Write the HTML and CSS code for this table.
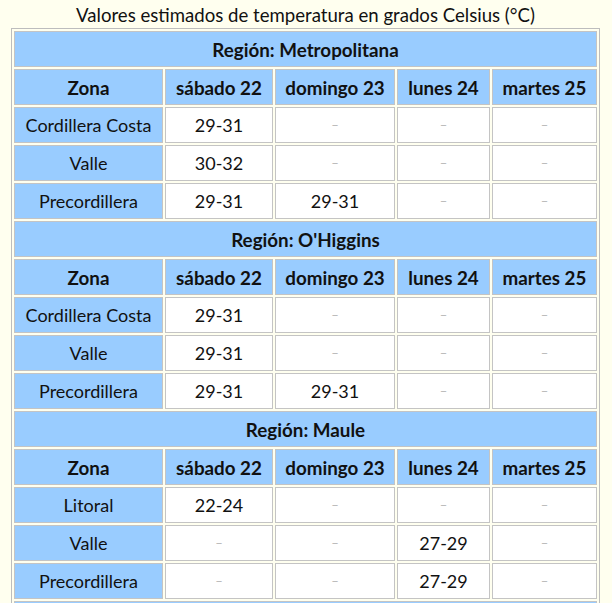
FILE: index.html
```html
<!DOCTYPE html>
<html lang="es">
<head>
<meta charset="utf-8">
<link rel="stylesheet" href="styles.css">
</head>
<body>
<div class="page">
  <div class="title">Valores estimados de temperatura en grados Celsius (°C)</div>
  <table class="temps">
    <colgroup>
      <col class="c-zona"><col class="c-sab"><col class="c-dom"><col class="c-lun"><col class="c-mar">
    </colgroup>
    <tbody>
      <tr><th class="region" colspan="5">Región: Metropolitana</th></tr>
      <tr><th>Zona</th><th>sábado 22</th><th>domingo 23</th><th>lunes 24</th><th>martes 25</th></tr>
      <tr><td class="zona">Cordillera Costa</td><td>29-31</td><td class="na">–</td><td class="na">–</td><td class="na">–</td></tr>
      <tr><td class="zona">Valle</td><td>30-32</td><td class="na">–</td><td class="na">–</td><td class="na">–</td></tr>
      <tr><td class="zona">Precordillera</td><td>29-31</td><td>29-31</td><td class="na">–</td><td class="na">–</td></tr>

      <tr><th class="region" colspan="5">Región: O'Higgins</th></tr>
      <tr><th>Zona</th><th>sábado 22</th><th>domingo 23</th><th>lunes 24</th><th>martes 25</th></tr>
      <tr><td class="zona">Cordillera Costa</td><td>29-31</td><td class="na">–</td><td class="na">–</td><td class="na">–</td></tr>
      <tr><td class="zona">Valle</td><td>29-31</td><td class="na">–</td><td class="na">–</td><td class="na">–</td></tr>
      <tr><td class="zona">Precordillera</td><td>29-31</td><td>29-31</td><td class="na">–</td><td class="na">–</td></tr>

      <tr><th class="region" colspan="5">Región: Maule</th></tr>
      <tr><th>Zona</th><th>sábado 22</th><th>domingo 23</th><th>lunes 24</th><th>martes 25</th></tr>
      <tr><td class="zona">Litoral</td><td>22-24</td><td class="na">–</td><td class="na">–</td><td class="na">–</td></tr>
      <tr><td class="zona">Valle</td><td class="na">–</td><td class="na">–</td><td>27-29</td><td class="na">–</td></tr>
      <tr><td class="zona">Precordillera</td><td class="na">–</td><td class="na">–</td><td>27-29</td><td class="na">–</td></tr>
      <tr><th class="region" colspan="5"></th></tr>
    </tbody>
  </table>
</div>
</body>
</html>
```

FILE: styles.css
```css
html, body {
  margin: 0;
  padding: 0;
  background: #ffffef;
}
body {
  font-family: Lato, "Open Sans", sans-serif;
  color: #111;
  overflow: hidden;
  height: 603px;
}
.page {
  padding: 3px 0 0 11px;
}
.title {
  width: 589px;
  text-align: center;
  font-size: 18.6px;
  line-height: 25px;
  color: #111;
}
.temps {
  width: 589px;
  table-layout: fixed;
  border: 1px solid #bdbdbd;
  border-spacing: 2px;
  border-collapse: separate;
  background: #ffffef;
}
.c-zona { width: 149px; }
.c-sab { width: 108px; }
.c-dom { width: 120px; }
.c-lun { width: 93px; }
.c-mar { width: 105px; }
.temps th,
.temps td {
  border: 1px solid #c4c4c4;
  padding: 0;
  text-align: center;
  vertical-align: middle;
  font-size: 18px;
  box-sizing: border-box;
  height: 36px;
}
.temps th {
  background: #99ccff;
  font-weight: 700;
  font-size: 18.8px;
}
.temps td {
  background: #fff;
}
.temps td.zona {
  background: #99ccff;
}
.temps td.na {
  color: #b8b8b8;
  font-size: 13px;
}
```
